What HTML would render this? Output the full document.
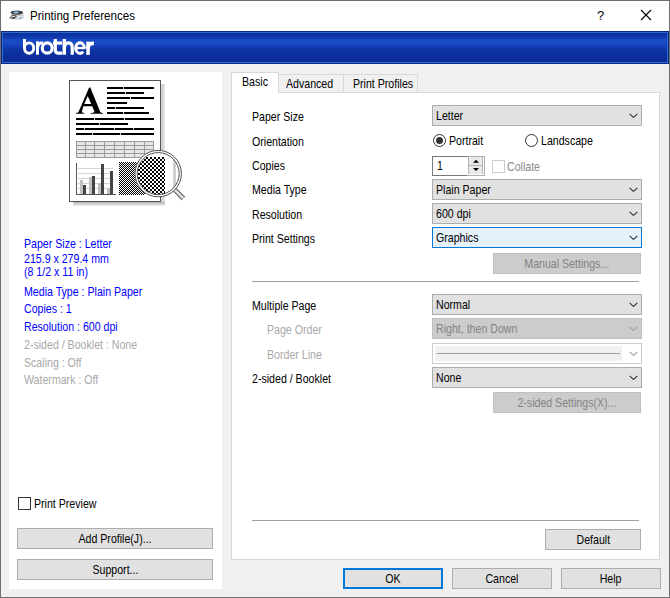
<!DOCTYPE html>
<html><head><meta charset="utf-8">
<style>
*{margin:0;padding:0;box-sizing:border-box}
html,body{width:670px;height:598px;overflow:hidden;background:#f0f0f0}
body{position:relative;font-family:"Liberation Sans",sans-serif;font-size:11px;color:#000}
.a{position:absolute}
.t{position:absolute;white-space:pre;line-height:12px;font-size:12.2px;transform:scaleX(0.87);transform-origin:0 0}
#win{position:absolute;left:0;top:0;width:670px;height:598px;border:1px solid #6e6e6e;background:#f0f0f0}
#title{position:absolute;left:1px;top:1px;width:668px;height:30px;background:#fff}
#banner{position:absolute;left:1px;top:31px;width:668px;height:33px;border:1px solid #08288a;
 background:linear-gradient(#0c2f9c 1px,#0f36a8 4px,#1a4dc6 9px,#1744bd 13px,#0f38ab 16px,#0c309e 22px,#0a2c96 29px)}
#banner .in{position:absolute;left:0;top:0;right:0;bottom:0;border:1px solid #2f6cc8}
#left{position:absolute;left:9px;top:72px;width:213px;height:517px;background:#fff}
.btn{position:absolute;background:#e1e1e1;border:1px solid #adadad;height:21px;text-align:center;line-height:19px;padding-top:1px;font-size:12.2px;white-space:pre}
.btn span{display:inline-block;transform:scaleX(0.87)}
.cb{position:absolute;background:#e1e1e1;border:1px solid #adadad;height:21px}
.cb .v{position:absolute;left:3px;top:1px;line-height:19px;font-size:12.2px;white-space:pre;transform:scaleX(0.87);transform-origin:0 0}
.chev{position:absolute;right:3px;top:7px;width:9px;height:5px}
#panel{position:absolute;left:231px;top:92px;width:429px;height:468px;background:#fff;border:1px solid #d9d9d9}
.blue{color:#0000ff}
.grey{color:#a8a8a8}
</style></head><body>
<div id="win"></div>
<div id="title"></div>
<!-- printer icon -->
<svg class="a" style="left:0;top:0" width="30" height="30" viewBox="0 0 30 30">
 <path d="M11 13.5 L23.5 13 L23.5 17.8 L17.5 19.8 L11 18.5 Z" fill="#c8c8c8"/>
 <path d="M17.5 16.2 L23.5 15.2 L23.5 17.8 L17.5 19.8 Z" fill="#e4e4e4"/>
 <path d="M19 18.6 L22.5 17.6" stroke="#5a8ab8" stroke-width="0.9"/>
 <ellipse cx="16.8" cy="12.6" rx="6.3" ry="2.1" fill="#404040"/>
 <ellipse cx="16" cy="12.4" rx="2.6" ry="1" fill="#8cc4f0"/>
 <rect x="15" y="10" width="2.5" height="1.2" fill="#b0b0b0"/>
 <path d="M9.8 17.8 L12.3 15.4 L16.3 16 L14.2 18.7 Z" fill="#f8f8f8" stroke="#333" stroke-width="0.9"/>
 <path d="M12 17.3 L15 17.6" stroke="#222" stroke-width="0.8"/>
</svg>
<div class="t" style="left:30px;top:9px;font-size:12px;letter-spacing:0;line-height:14px;transform:scaleX(0.965)">Printing Preferences</div>
<div class="t" style="left:597px;top:9px;font-size:13px;letter-spacing:0;line-height:14px;transform:none">?</div>
<svg class="a" style="left:640px;top:9px" width="12" height="12" viewBox="0 0 12 12"><path d="M1 1 L11 11 M11 1 L1 11" stroke="#000" stroke-width="1.1"/></svg>

<div id="banner"><div class="in"></div></div>
<svg class="a" style="left:0;top:0" width="100" height="64" viewBox="0 0 100 64" fill="none" stroke="#fff">
<rect x="23" y="39" width="3" height="9.5" fill="#fff" stroke="none"/>
<ellipse cx="29.1" cy="48.1" rx="4.6" ry="5.2" stroke-width="2.9"/>
<rect x="36" y="41.3" width="2.9" height="13.4" fill="#fff" stroke="none"/>
<path d="M37.45 49 C37.45 44 39.5 42.75 42.8 42.75" stroke-width="2.9"/>
<ellipse cx="47.2" cy="48" rx="4.95" ry="5.15" stroke-width="3.1"/>
<path d="M55.3 39.1 V50 C55.3 52.4 56.5 53.2 58.5 53.2 H62.3" stroke-width="3.2"/>
<rect x="53" y="41.5" width="9" height="3.1" fill="#fff" stroke="none"/>
<rect x="62.6" y="39" width="3.4" height="15.7" fill="#fff" stroke="none"/>
<path d="M64.3 49 C64.3 44 66.5 42.9 68.4 42.9 C71 42.9 72.25 44.5 72.25 47.5 V54.7" stroke-width="3.2"/>
<path d="M75.5 48.05 H85.5" stroke-width="2.3"/>
<path d="M84.35 48.05 A4.35 5.3 0 1 0 83.23 51.65" stroke-width="3"/>
<rect x="86.3" y="41.6" width="3.5" height="13.3" fill="#fff" stroke="none"/>
<path d="M88.05 49 C88.05 44.5 90 43.3 92.5 43.3 H93.9" stroke-width="3.7"/>
</svg>

<div id="left"></div>
<svg class="a" style="left:0;top:0" width="230" height="215" viewBox="0 0 230 215">
<defs>
<pattern id="fine" x="0" y="0" width="2" height="2" patternUnits="userSpaceOnUse"><rect x="1" y="0" width="1" height="1" fill="#000"/><rect x="0" y="1" width="1" height="1" fill="#000"/></pattern>
<pattern id="big" x="0" y="1" width="4" height="4" patternUnits="userSpaceOnUse"><rect x="2" y="0" width="2" height="2" fill="#000"/><rect x="0" y="2" width="2" height="2" fill="#000"/></pattern>
<linearGradient id="shr" x1="0" x2="1" y1="0" y2="0"><stop offset="0" stop-color="#d6d6d6"/><stop offset="0.4" stop-color="#cecece"/><stop offset="1" stop-color="#eeeeee"/></linearGradient>
<linearGradient id="shb" x1="0" x2="0" y1="0" y2="1"><stop offset="0" stop-color="#b0b0b0"/><stop offset="1" stop-color="#f2f2f2"/></linearGradient>
<clipPath id="lens"><circle cx="158.2" cy="173.6" r="21"/></clipPath>
</defs>
<g shape-rendering="crispEdges">
<rect x="161" y="84" width="4" height="121" fill="url(#shr)"/>
<rect x="73" y="202" width="92" height="4" fill="url(#shb)"/>
<rect x="69" y="80" width="92" height="122" fill="#fff"/>
<rect x="69" y="80" width="92" height="1" fill="#555"/>
<rect x="69" y="201" width="92" height="1" fill="#555"/>
<rect x="69" y="80" width="1" height="122" fill="#555"/>
<rect x="160" y="80" width="1" height="122" fill="#555"/>
<!-- upper text lines -->
<rect x="107" y="87" width="47" height="2" fill="#000"/>
<rect x="107" y="92" width="37" height="2" fill="#000"/>
<rect x="107" y="97" width="47" height="2" fill="#000"/>
<rect x="107" y="102" width="20" height="2" fill="#000"/>
<rect x="107" y="107" width="37" height="2" fill="#000"/>
<rect x="107" y="112" width="42" height="2" fill="#000"/>
<rect x="76" y="118" width="78" height="2" fill="#000"/>
<rect x="76" y="123" width="52" height="2" fill="#000"/>
<rect x="76" y="128" width="78" height="2" fill="#000"/>
<rect x="76" y="133" width="78" height="2" fill="#000"/>
<rect x="123" y="87" width="1" height="2" fill="#c8c8c8"/>
<rect x="125" y="92" width="1" height="2" fill="#c8c8c8"/>
<rect x="130" y="97" width="1" height="2" fill="#c8c8c8"/>
<rect x="115" y="107" width="1" height="2" fill="#c8c8c8"/>
<rect x="123" y="112" width="1" height="2" fill="#c8c8c8"/>
<rect x="94" y="118" width="1" height="2" fill="#c8c8c8"/>
<rect x="124" y="118" width="1" height="2" fill="#c8c8c8"/>
<rect x="99" y="123" width="1" height="2" fill="#c8c8c8"/>
<rect x="84" y="128" width="1" height="2" fill="#c8c8c8"/>
<rect x="114" y="128" width="1" height="2" fill="#c8c8c8"/>
<rect x="133" y="128" width="1" height="2" fill="#c8c8c8"/>
<rect x="92" y="133" width="1" height="2" fill="#c8c8c8"/>
<rect x="120" y="133" width="1" height="2" fill="#c8c8c8"/>
<!-- table -->
<rect x="76" y="141" width="78" height="17" fill="#e6e6e6"/>
<path d="M76 141.5H154 M76 145.5H154 M76 149.5H154 M76 153.5H154 M76 157.5H154 M76.5 141V158 M85.5 141V158 M94.5 141V158 M104.5 141V158 M114.5 141V158 M124.5 141V158 M134.5 141V158 M144.5 141V158 M153.5 141V158" stroke="#9a9a9a" stroke-width="1" fill="none"/>
<!-- chart -->
<path d="M78 168.5H113 M78 173.5H113 M78 178.5H113 M78 183.5H113 M78 188.5H113" stroke="#d4d4d4" stroke-width="1"/>
<rect x="80" y="180" width="3" height="14" fill="#c0c0c0"/>
<rect x="83" y="185" width="3" height="9" fill="#444"/>
<rect x="89" y="177" width="3" height="17" fill="#c0c0c0"/>
<rect x="92" y="176" width="3" height="18" fill="#444"/>
<rect x="98" y="183" width="3" height="11" fill="#c0c0c0"/>
<rect x="101" y="164" width="3" height="30" fill="#444"/>
<rect x="107" y="188" width="3" height="6" fill="#c0c0c0"/>
<rect x="110" y="171" width="3" height="23" fill="#444"/>
<rect x="76" y="163" width="1" height="32" fill="#555"/>
<rect x="76" y="194" width="40" height="1" fill="#555"/>
<path fill-rule="evenodd" fill="#000" shape-rendering="geometricPrecision" d="M89.1 87.6 L90.3 87.6 L100.3 111.9 Q101.2 112.7 103 112.9 L103 113.8 L90.8 113.8 L90.8 112.9 Q93.5 112.7 94.6 111.9 L92.2 106.2 L83.4 106.2 L81.8 111.9 Q82.5 112.7 84.4 112.9 L84.4 113.8 L76 113.8 L76 112.9 Q77.8 112.7 78.5 111.9 Z M87.7 96 L91.2 104 L84.3 104 Z"/>
<!-- fine checker -->
<rect x="119" y="162" width="26" height="33" fill="url(#fine)"/>
</g>
<!-- magnifier -->
<path d="M174.5 189.5 L183.5 198.5" stroke="#5a5a5a" stroke-width="4.6" stroke-linecap="butt"/>
<path d="M174.5 189.5 L183.5 198.5" stroke="#dcdcdc" stroke-width="2.6" stroke-linecap="butt"/>
<circle cx="158.2" cy="173.6" r="23.6" fill="#fff" stroke="none"/>
<g clip-path="url(#lens)" shape-rendering="crispEdges">
<rect x="134" y="157" width="31" height="38" fill="url(#big)"/>
<rect x="173" y="150" width="2.5" height="48" fill="#d0d0d0"/>
</g>
<circle cx="158.2" cy="173.6" r="23.2" fill="none" stroke="#505050" stroke-width="1"/>
<circle cx="158.2" cy="173.6" r="21" fill="none" stroke="#505050" stroke-width="1"/>
</svg>


<!-- info texts -->
<div class="t blue" style="left:24px;top:238px">Paper Size : Letter</div>
<div class="t blue" style="left:24px;top:253px">215.9 x 279.4 mm</div>
<div class="t blue" style="left:24px;top:266px">(8 1/2 x 11 in)</div>
<div class="t blue" style="left:24px;top:286px">Media Type : Plain Paper</div>
<div class="t blue" style="left:24px;top:303px">Copies : 1</div>
<div class="t blue" style="left:24px;top:321px">Resolution : 600 dpi</div>
<div class="t grey" style="left:24px;top:339px">2-sided / Booklet : None</div>
<div class="t grey" style="left:24px;top:357px">Scaling : Off</div>
<div class="t grey" style="left:24px;top:374px">Watermark : Off</div>

<div class="a" style="left:18px;top:497px;width:13px;height:13px;border:1px solid #333;background:#fff"></div>
<div class="t" style="left:34px;top:498px">Print Preview</div>
<div class="btn" style="left:17px;top:528px;width:196px"><span>Add Profile(J)...</span></div>
<div class="btn" style="left:17px;top:559px;width:196px"><span>Support...</span></div>

<!-- tabs -->
<div class="a" style="left:278px;top:74px;width:66px;height:19px;background:#f0f0f0;border:1px solid #d9d9d9;border-bottom:none"></div>
<div class="a" style="left:343px;top:74px;width:75px;height:19px;background:#f0f0f0;border:1px solid #d9d9d9;border-bottom:none"></div>
<div id="panel"></div>
<div class="a" style="left:231px;top:72px;width:48px;height:21px;background:#fff;border:1px solid #d9d9d9;border-bottom:none"></div>
<div class="t" style="left:242px;top:76px">Basic</div>
<div class="t" style="left:286px;top:78px">Advanced</div>
<div class="t" style="left:353px;top:78px">Print Profiles</div>

<!-- labels -->
<div class="t" style="left:252px;top:111px">Paper Size</div>
<div class="t" style="left:252px;top:136px">Orientation</div>
<div class="t" style="left:252px;top:160px">Copies</div>
<div class="t" style="left:252px;top:184px">Media Type</div>
<div class="t" style="left:252px;top:209px">Resolution</div>
<div class="t" style="left:252px;top:233px">Print Settings</div>

<div class="cb" style="left:432px;top:105px;width:210px"><span class="v">Letter</span><svg class="chev" viewBox="0 0 9 5"><path d="M0.6 0.8 L4.5 4.4 L8.4 0.8" fill="none" stroke="#333" stroke-width="1.1"/></svg></div>

<!-- radios -->
<svg class="a" style="left:433px;top:134px" width="13" height="13" viewBox="0 0 13 13"><circle cx="6.5" cy="6.5" r="6" fill="#fff" stroke="#333"/><circle cx="6.5" cy="6.5" r="3.5" fill="#333"/></svg>
<div class="t" style="left:449px;top:135px">Portrait</div>
<svg class="a" style="left:525px;top:134px" width="13" height="13" viewBox="0 0 13 13"><circle cx="6.5" cy="6.5" r="6" fill="#fff" stroke="#333"/></svg>
<div class="t" style="left:541px;top:135px">Landscape</div>

<!-- spin -->
<div class="a" style="left:432px;top:156px;width:53px;height:20px;border:1px solid #7a7a7a;border-right-color:#adadad;background:#fff"></div>
<div class="t" style="left:437px;top:160px">1</div>
<div class="a" style="left:467px;top:156px;width:18px;height:20px;border:1px solid #adadad;border-left:none;background:#fff"></div>
<div class="a" style="left:468px;top:157px;width:15px;height:17px;background:#e9e9e9;border-left:1px solid #b4b4b4;border-right:1px solid #b4b4b4"></div>
<div class="a" style="left:468px;top:165px;width:15px;height:1px;background:#b4b4b4"></div>
<svg class="a" style="left:472px;top:159px" width="8" height="14" viewBox="0 0 8 14"><path d="M1 3.8 L4 0.8 L7 3.8 Z M1 9 L4 12 L7 9 Z" fill="#000"/></svg>
<div class="a" style="left:492px;top:160px;width:13px;height:13px;border:1px solid #cccccc;background:#fff"></div>
<div class="t grey" style="left:507px;top:161px;color:#8a8a8a">Collate</div>

<div class="cb" style="left:432px;top:179px;width:210px"><span class="v">Plain Paper</span><svg class="chev" viewBox="0 0 9 5"><path d="M0.6 0.8 L4.5 4.4 L8.4 0.8" fill="none" stroke="#333" stroke-width="1.1"/></svg></div>
<div class="cb" style="left:432px;top:203px;width:210px"><span class="v">600 dpi</span><svg class="chev" viewBox="0 0 9 5"><path d="M0.6 0.8 L4.5 4.4 L8.4 0.8" fill="none" stroke="#333" stroke-width="1.1"/></svg></div>
<div class="cb" style="left:432px;top:227px;width:210px;background:#e5f1fb;border-color:#0078d7"><span class="v">Graphics</span><svg class="chev" viewBox="0 0 9 5"><path d="M0.6 0.8 L4.5 4.4 L8.4 0.8" fill="none" stroke="#333" stroke-width="1.1"/></svg></div>
<div class="btn" style="left:493px;top:253px;width:148px;background:#cccccc;border-color:#bfbfbf;color:#838383"><span>Manual Settings...</span></div>

<div class="a" style="left:252px;top:281px;width:387px;height:1px;background:#a0a0a0"></div>

<div class="t" style="left:252px;top:300px">Multiple Page</div>
<div class="t grey" style="left:267px;top:324px">Page Order</div>
<div class="t grey" style="left:267px;top:349px">Border Line</div>
<div class="t" style="left:252px;top:373px">2-sided / Booklet</div>

<div class="cb" style="left:432px;top:294px;width:210px"><span class="v">Normal</span><svg class="chev" viewBox="0 0 9 5"><path d="M0.6 0.8 L4.5 4.4 L8.4 0.8" fill="none" stroke="#333" stroke-width="1.1"/></svg></div>
<div class="cb" style="left:432px;top:318px;width:210px;background:#cccccc;border-color:#bfbfbf;color:#838383"><span class="v">Right, then Down</span><svg class="chev" viewBox="0 0 9 5"><path d="M0.6 0.8 L4.5 4.4 L8.4 0.8" fill="none" stroke="#a0a0a0" stroke-width="1.1"/></svg></div>
<div class="cb" style="left:432px;top:343px;width:210px;background:#fff;border-color:#cccccc"><div class="a" style="left:2px;top:2px;width:187px;height:15px;background:#f0f0f0"></div><div class="a" style="left:4px;top:9px;width:183px;height:1px;background:#a0a0a0"></div><svg class="chev" viewBox="0 0 9 5"><path d="M0.6 0.8 L4.5 4.4 L8.4 0.8" fill="none" stroke="#a0a0a0" stroke-width="1.1"/></svg></div>
<div class="cb" style="left:432px;top:367px;width:210px"><span class="v">None</span><svg class="chev" viewBox="0 0 9 5"><path d="M0.6 0.8 L4.5 4.4 L8.4 0.8" fill="none" stroke="#333" stroke-width="1.1"/></svg></div>
<div class="btn" style="left:493px;top:392px;width:148px;background:#cccccc;border-color:#bfbfbf;color:#838383"><span>2-sided Settings(X)...</span></div>

<div class="a" style="left:252px;top:520px;width:387px;height:1px;background:#a0a0a0"></div>
<div class="btn" style="left:545px;top:529px;width:96px"><span>Default</span></div>

<div class="btn" style="left:343px;top:568px;width:100px;border:2px solid #0078d7;line-height:17px"><span>OK</span></div>
<div class="btn" style="left:452px;top:568px;width:100px"><span>Cancel</span></div>
<div class="btn" style="left:561px;top:568px;width:100px"><span>Help</span></div>
</body></html>
